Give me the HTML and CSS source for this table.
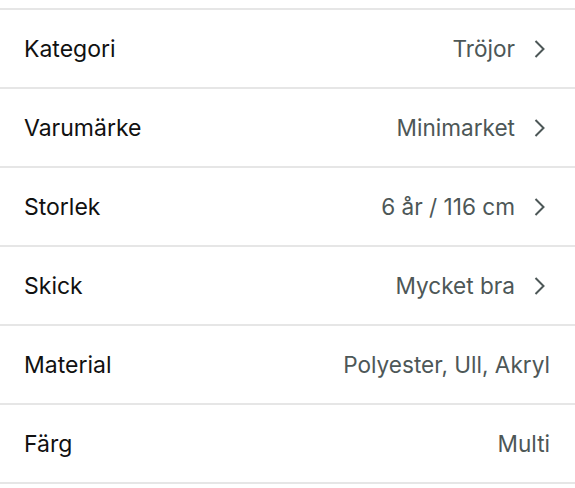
FILE: index.html
```html
<!DOCTYPE html>
<html lang="sv">
  <head>
    <meta charset="UTF-8" />
    <meta name="viewport" content="width=device-width, initial-scale=1.0" />
    <title>Detaljer</title>
    <link rel="stylesheet" href="styles.css">
  </head>
  <body>
    <ul class="details">
      <li class="row">
        <span class="label">Kategori</span>
        <span class="value">Tröjor</span>
        <svg class="chevron" viewBox="0 0 24 24"><path d="M9.5 4l8 8-8 8" /></svg>
      </li>
      <li class="row">
        <span class="label">Varumärke</span>
        <span class="value">Minimarket</span>
        <svg class="chevron" viewBox="0 0 24 24"><path d="M9.5 4l8 8-8 8" /></svg>
      </li>
      <li class="row">
        <span class="label">Storlek</span>
        <span class="value">6 år / 116 cm</span>
        <svg class="chevron" viewBox="0 0 24 24"><path d="M9.5 4l8 8-8 8" /></svg>
      </li>
      <li class="row">
        <span class="label">Skick</span>
        <span class="value">Mycket bra</span>
        <svg class="chevron" viewBox="0 0 24 24"><path d="M9.5 4l8 8-8 8" /></svg>
      </li>
      <li class="row">
        <span class="label">Material</span>
        <span class="value">Polyester, Ull, Akryl</span>
      </li>
      <li class="row">
        <span class="label">Färg</span>
        <span class="value">Multi</span>
      </li>
    </ul>
  </body>
</html>
```

FILE: styles.css
```css
body {
  margin: 0;
  padding-top: 8px;
  background: #fff;
  font-family: "Inter", "Noto Sans", sans-serif;
}

.details {
  list-style: none;
  margin: 0;
  padding: 0;
  border-bottom: 2px solid #e6e6e6;
}

.row {
  display: flex;
  align-items: center;
  height: 77px;
  padding: 0 25px 0 24px;
  border-top: 2px solid #e6e6e6;
}

.label {
  flex: 1;
  font-size: 23px;
  color: #111;
}

.value {
  font-size: 22.6px;
  color: #4d5757;
}

.chevron {
  width: 24px;
  height: 24px;
  margin-left: 11px;
  fill: none;
  stroke: #4d5757;
  stroke-width: 2;
}
```
